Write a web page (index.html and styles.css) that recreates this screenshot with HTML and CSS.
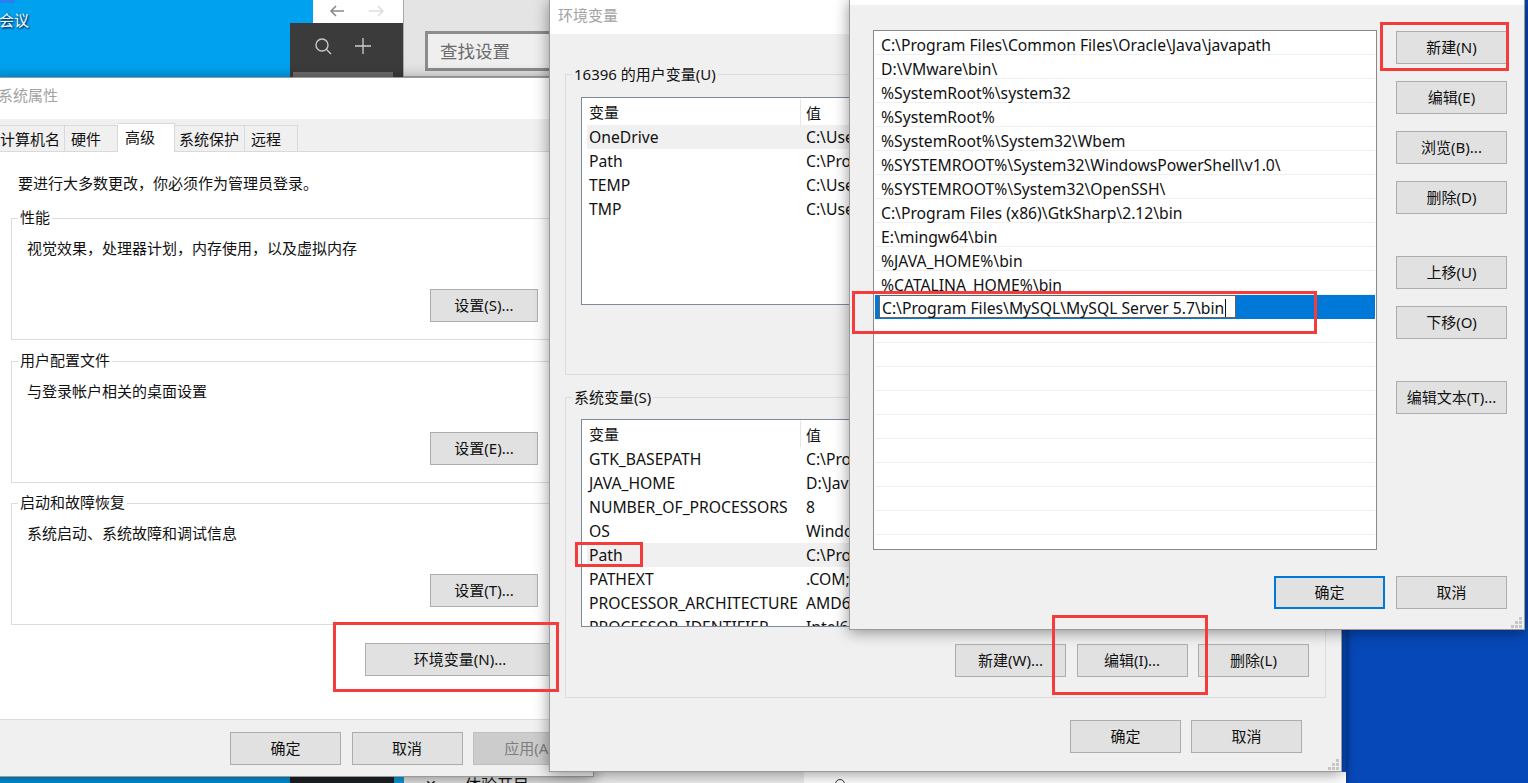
FILE: index.html
```html
<!DOCTYPE html>
<html lang="zh-CN">
<head>
<meta charset="utf-8">
<title>环境变量</title>
<link rel="stylesheet" href="styles.css">
</head>
<body>
<div class="desk">
  <div class="bg-tile"></div>
  <div class="bg-meeting">会议</div>
  <div class="bg-browser">
    <svg class="nav-arrows" width="60" height="14" viewBox="0 0 60 14"><path d="M15 7H2M7 2 2 7l5 5" fill="none" stroke="#8a8a8a" stroke-width="1.6"/><path d="M40 7h14M49 2l5 5-5 5" fill="none" stroke="#dedede" stroke-width="1.6"/></svg>
  </div>
  <div class="bg-dark">
    <svg width="60" height="20" viewBox="0 0 60 20"><circle cx="9" cy="8" r="6" fill="none" stroke="#c8c8c8" stroke-width="1.4"/><path d="M13.5 12.5 18 17M50 1v16M42 9h16" fill="none" stroke="#d0d0d0" stroke-width="1.3"/></svg>
    <div class="bg-dark-strip"></div>
  </div>
  <div class="bg-settings">
    <div class="bg-settings-title">设置</div>
    <div class="bg-search">查找设置</div>
  </div>
  <div class="bg-bottom-blue"></div>
  <div class="bg-bottom-dark"></div>
  <div class="bg-bottom-light"></div>
  <div class="bg-bottom-grey"><span class="bg-tool-icon">✕</span><span class="bg-tool">体验开目</span></div>
  <div class="bg-bottom-white"><i class="bg-ring"></i></div>
  <div class="bg-wall"></div>

  <section class="win win-sys">
    <div class="title title-sys">系统属性</div>
    <div class="tabs">
      <div class="tab tab-a">计算机名</div>
      <div class="tab tab-b">硬件</div>
      <div class="tab tab-c tab-on">高级</div>
      <div class="tab tab-d">系统保护</div>
      <div class="tab tab-b">远程</div>
    </div>
    <div class="sys-page">
      <p class="sys-note">要进行大多数更改，你必须作为管理员登录。</p>
      <div class="sys-group">
        <div class="legend legend-white">性能</div>
        <p class="sys-desc">视觉效果，处理器计划，内存使用，以及虚拟内存</p>
        <button class="btn btn-set">设置(S)...</button>
      </div>
      <div class="sys-group">
        <div class="legend legend-white">用户配置文件</div>
        <p class="sys-desc">与登录帐户相关的桌面设置</p>
        <button class="btn btn-set">设置(E)...</button>
      </div>
      <div class="sys-group">
        <div class="legend legend-white">启动和故障恢复</div>
        <p class="sys-desc">系统启动、系统故障和调试信息</p>
        <button class="btn btn-set">设置(T)...</button>
      </div>
      <div class="sys-env"><button class="btn btn-env">环境变量(N)...</button></div>
    </div>
    <div class="sys-foot">
      <button class="btn">确定</button>
      <button class="btn">取消</button>
      <button class="btn btn-off">应用(A)</button>
    </div>
  </section>

  <section class="win win-env">
    <div class="title title-env">环境变量</div>
    <div class="env-body">
      <div class="env-group env-group-user">
        <div class="legend">16396 的用户变量(U)</div>
        <div class="varlist">
          <div class="varhead"><div class="c1">变量</div><div class="c2 c2-head">值</div></div>
          <div class="varrow varrow-on"><div class="c1">OneDrive</div><div class="c2">C:\Users\16396\OneDrive</div></div>
          <div class="varrow"><div class="c1">Path</div><div class="c2">C:\Program Files\Java</div></div>
          <div class="varrow"><div class="c1">TEMP</div><div class="c2">C:\Users\16396\Temp</div></div>
          <div class="varrow"><div class="c1">TMP</div><div class="c2">C:\Users\16396\Temp</div></div>
        </div>
      </div>
      <div class="env-group env-group-sys">
        <div class="legend">系统变量(S)</div>
        <div class="varlist">
          <div class="varhead"><div class="c1">变量</div><div class="c2 c2-head">值</div></div>
          <div class="varrow"><div class="c1">GTK_BASEPATH</div><div class="c2">C:\Program Files</div></div>
          <div class="varrow"><div class="c1">JAVA_HOME</div><div class="c2">D:\Java</div></div>
          <div class="varrow"><div class="c1">NUMBER_OF_PROCESSORS</div><div class="c2">8</div></div>
          <div class="varrow"><div class="c1">OS</div><div class="c2">Windows_NT</div></div>
          <div class="varrow varrow-on"><div class="c1">Path</div><div class="c2">C:\Program Files</div></div>
          <div class="varrow"><div class="c1">PATHEXT</div><div class="c2">.COM;.EXE;.BAT</div></div>
          <div class="varrow"><div class="c1">PROCESSOR_ARCHITECTURE</div><div class="c2">AMD64</div></div>
          <div class="varrow"><div class="c1">PROCESSOR_IDENTIFIER</div><div class="c2">Intel64 Family</div></div>
        </div>
        <div class="env-actions">
          <button class="btn">新建(W)...</button>
          <button class="btn">编辑(I)...</button>
          <button class="btn">删除(L)</button>
        </div>
      </div>
      <div class="env-foot">
        <button class="btn">确定</button>
        <button class="btn">取消</button>
      </div>
    </div>
    <svg class="grip" width="12" height="12" viewBox="0 0 12 12"><path d="M8 0h3v3H8zM4 4h3v3H4zM8 4h3v3H8zM0 8h3v3H0zM4 8h3v3H4zM8 8h3v3H8z" fill="#c6c6c6"/></svg>
  </section>

  <section class="win win-path">
    <div class="title title-path"></div>
    <div class="path-body">
      <div class="path-main">
        <div class="pathlist">
          <div class="pathrow">C:\Program Files\Common Files\Oracle\Java\javapath</div>
          <div class="pathrow">D:\VMware\bin\</div>
          <div class="pathrow">%SystemRoot%\system32</div>
          <div class="pathrow">%SystemRoot%</div>
          <div class="pathrow">%SystemRoot%\System32\Wbem</div>
          <div class="pathrow">%SYSTEMROOT%\System32\WindowsPowerShell\v1.0\</div>
          <div class="pathrow">%SYSTEMROOT%\System32\OpenSSH\</div>
          <div class="pathrow">C:\Program Files (x86)\GtkSharp\2.12\bin</div>
          <div class="pathrow">E:\mingw64\bin</div>
          <div class="pathrow">%JAVA_HOME%\bin</div>
          <div class="pathrow">%CATALINA_HOME%\bin</div>
          <div class="pathrow pathrow-on"><div class="pathedit"><span>C:\Program Files\MySQL\MySQL Server 5.7\bin</span><i class="caret"></i></div></div>
          <div class="pathrow"></div><div class="pathrow"></div><div class="pathrow"></div>
          <div class="pathrow"></div><div class="pathrow"></div><div class="pathrow"></div>
          <div class="pathrow"></div><div class="pathrow"></div><div class="pathrow"></div>
        </div>
        <div class="path-side">
          <button class="btn">新建(N)</button>
          <button class="btn">编辑(E)</button>
          <button class="btn">浏览(B)...</button>
          <button class="btn">删除(D)</button>
          <button class="btn side-break">上移(U)</button>
          <button class="btn">下移(O)</button>
          <button class="btn side-break">编辑文本(T)...</button>
        </div>
      </div>
      <div class="path-foot">
        <button class="btn btn-default">确定</button>
        <button class="btn">取消</button>
      </div>
    </div>
    <svg class="grip" width="12" height="12" viewBox="0 0 12 12"><path d="M8 0h3v3H8zM4 4h3v3H4zM8 4h3v3H8zM0 8h3v3H0zM4 8h3v3H4zM8 8h3v3H8z" fill="#c6c6c6"/></svg>
  </section>

  <div class="mark mark-env"></div>
  <div class="mark mark-path"></div>
  <div class="mark mark-edit"></div>
  <div class="mark mark-new"></div>
  <div class="mark mark-input"></div>
</div>
</body>
</html>
```
FILE: styles.css
```css
* { box-sizing: border-box; }
html, body { margin: 0; height: 100%; overflow: hidden; }
body {
  font-family: "Noto Sans", "Noto Sans CJK SC", sans-serif;
  font-size: 15px;
  color: #111;
  background: #0748b8;
}
p { margin: 0; }
.desk { position: relative; width: 1528px; height: 783px; overflow: hidden; }

/* desktop backdrop */
.bg-tile { position: absolute; left: 0; top: 0; width: 313px; height: 77px; background: #00a1ee; }
.bg-tile::before { content: ""; position: absolute; left: 0; top: 0; width: 15px; height: 3px; background: #2a7ef0; }
.bg-meeting { position: absolute; left: -1px; top: 10px; line-height: 20px; color: #fff; text-shadow: 1px 1px 2px #003; }
.bg-browser { position: absolute; left: 313px; top: 0; width: 92px; height: 23px; background: #fff; }
.nav-arrows { position: absolute; left: 16px; top: 4px; }
.bg-dark { position: absolute; left: 290px; top: 23px; width: 115px; height: 54px; background: #3b3b3b; padding: 14px 0 0 23px; }
.bg-dark-strip { position: absolute; left: 3px; right: 12px; bottom: 0; height: 5px; background: #6e6e6e; }
.bg-settings { position: absolute; left: 403px; top: 0; width: 146px; height: 77px; background: #e4e4e4; border-left: 1px solid #aaa; border-bottom: 1px solid #aaa; }
.bg-settings-title { position: absolute; left: 22px; top: -22px; font-size: 20px; line-height: 26px; }
.bg-search { position: absolute; left: 21px; top: 31px; width: 125px; height: 40px; border: 3px solid #8c8c8c; border-right: 0; background: #efefef; color: #6b6b6b; font-size: 17.5px; line-height: 34px; padding-left: 12px; }
.bg-bottom-blue { position: absolute; left: 0; top: 772px; width: 290px; height: 11px; background: #0096dc; }
.bg-bottom-dark { position: absolute; left: 290px; top: 772px; width: 104px; height: 11px; background: #1f2326; }
.bg-bottom-light { position: absolute; left: 394px; top: 772px; width: 10px; height: 11px; background: #0d9fe2; }
.bg-bottom-grey { position: absolute; left: 404px; top: 772px; width: 400px; height: 11px; background: #ececec; overflow: hidden; }
.bg-tool { position: absolute; left: 61px; top: 3px; line-height: 20px; font-size: 16px; }
.bg-tool-icon { position: absolute; left: 21px; top: 3px; line-height: 20px; font-size: 14px; }
.bg-bottom-white { position: absolute; left: 804px; top: 772px; width: 542px; height: 11px; background: #fff; overflow: hidden; }
.bg-ring { position: absolute; left: 31px; top: 7px; width: 10px; height: 10px; border: 1px solid #333; border-radius: 50%; }
.bg-wall { position: absolute; left: 1346px; top: 0; width: 182px; height: 783px; background: #0748b8; box-shadow: inset 4px 0 4px -2px #04388f; }

/* windows */
.win { position: absolute; background: #f0f0f0; border: 1px solid #9a9a9a; box-shadow: 0 2px 14px rgba(0, 0, 0, .42); }
.win-sys { left: -10px; top: 77px; width: 604px; height: 700px; display: flex; flex-direction: column; }
.win-env { left: 549px; top: -1px; width: 793px; height: 773px; display: flex; flex-direction: column; }
.win-path { left: 849px; top: -1px; width: 676px; height: 631px; display: flex; flex-direction: column; }
.title { background: #fff; color: #a2a2a2; line-height: 20px; flex: none; }
.title-sys { height: 41px; padding: 7px 0 0 7px; }
.title-env { height: 34px; padding: 5px 0 0 8px; }
.title-path { height: 5px; }
.grip { position: absolute; right: 1px; bottom: 0; }

.btn {
  width: 111px; height: 33px; padding: 0; flex: none;
  font: inherit; color: #111; line-height: 1;
  background: #e1e1e1; border: 1px solid #adadad; border-radius: 0;
}
.btn-off { background: #ccc; border-color: #bfbfbf; color: #7e7e7e; }
.btn-default { border: 2px solid #0078d7; }

/* system properties */
.tabs { display: flex; align-items: flex-end; height: 33px; padding-left: 6px; flex: none; position: relative; z-index: 1; }
.tab { height: 27px; line-height: 27px; padding-left: 6px; white-space: nowrap; background: #f0f0f0; border: 1px solid #d9d9d9; border-left: 0; }
.tab-a { width: 68px; border-left: 1px solid #d9d9d9; padding-left: 2px; }
.tab-b { width: 53px; }
.tab-c { width: 57px; padding-left: 7px; }
.tab-d { width: 70px; padding-left: 4px; }
.tab-on { height: 29px; background: #fff; border-bottom: 0; line-height: 27px; }
.sys-page { height: 568px; background: #fff; border-top: 1px solid #d9d9d9; margin-top: -1px; padding: 21px 0 0 20px; flex: none; }
.sys-note { line-height: 20px; margin-left: 7px; margin-bottom: 25px; }
.sys-group { height: 122px; width: 541px; border: 1px solid #dcdcdc; padding: 0 13px 17px 15px; margin-bottom: 20.5px; display: flex; flex-direction: column; }
.legend { flex: none; align-self: flex-start; line-height: 20px; margin: -12px 0 0 -9px; padding: 0 2px; background: #f0f0f0; }
.legend-white { background: #fff; }
.sys-desc { line-height: 20px; margin-top: 11px; }
.btn-set { margin-top: auto; align-self: flex-end; width: 108px; }
.sys-env { margin-top: -3px; padding-left: 354px; }
.btn-env { width: 190px; }
.sys-foot { flex: 1; display: flex; justify-content: flex-end; gap: 10.5px; padding: 12px 9px 0 0; border-top: 1px solid #dcdcdc; }

/* environment variables */
.env-body { flex: 1; padding: 40px 15px 0 15px; }
.env-group { position: relative; height: 301px; width: 761px; border: 1px solid #dcdcdc; padding: 0 15px 0 15px; }
.env-group-user { margin-bottom: 22px; }
.env-group-user .varlist { margin-top: 13px; }
.env-group .legend { margin: -11px 0 0 -9px; width: fit-content; }
.varlist { height: 208px; margin-top: 12px; border: 1px solid #7f8a99; background: #fff; overflow: hidden; padding-left: 5px; }
.varhead { display: flex; height: 27px; line-height: 28px; }
.varrow { display: flex; height: 24px; line-height: 24px; white-space: nowrap; font-size: 15.7px; }
.varrow-on { background: #f0f0f0; }
.c1 { width: 213px; padding-left: 2px; flex: none; }
.c2 { padding-left: 6px; }
.c2-head { border-left: 1px solid #e5e5e5; height: 26px; line-height: 28px; padding-left: 5px; margin-top: 1px; }
.env-actions { display: flex; gap: 10.5px; justify-content: flex-end; padding: 17px 1px 0 0; }
.env-foot { display: flex; gap: 10px; justify-content: flex-end; padding: 22px 24px 0 0; }

/* edit path dialog */
.path-body { flex: 1; padding: 25px 17px 0 23px; }
.path-main { display: flex; justify-content: space-between; }
.pathlist { width: 504px; height: 520px; border: 1px solid #8a8a8a; background: #fff; padding: 0 1px; font-size: 15.7px; }
.pathrow { height: 24px; line-height: 28px; padding-left: 6px; border-bottom: 1px solid #f0f0f0; white-space: nowrap; }
.pathrow-on { background: #0078d7; border-bottom: 0; padding: 0 0 0 4px; height: 24px; }
.pathedit { display: flex; align-items: center; width: 357px; height: 23px; padding: 2px 0 0 2px; background: #fff; border: 1px solid #646464; }
.caret { display: block; width: 1px; height: 18px; background: #111; margin-left: 1px; }
.path-side { display: flex; flex-direction: column; gap: 17px; padding-top: 1px; }
.side-break { margin-top: 25px; }
.path-foot { display: flex; justify-content: flex-end; gap: 11px; padding-top: 26px; }

/* red annotations */
.mark { position: absolute; border: 3px solid #f43c3c; }
.mark-env { left: 333px; top: 622px; width: 226px; height: 70px; }
.mark-path { left: 575px; top: 542px; width: 68px; height: 25px; }
.mark-edit { left: 1052px; top: 615px; width: 156px; height: 80px; }
.mark-new { left: 1380px; top: 22px; width: 129px; height: 49px; }
.mark-input { left: 852px; top: 291px; width: 465px; height: 43px; }
```
